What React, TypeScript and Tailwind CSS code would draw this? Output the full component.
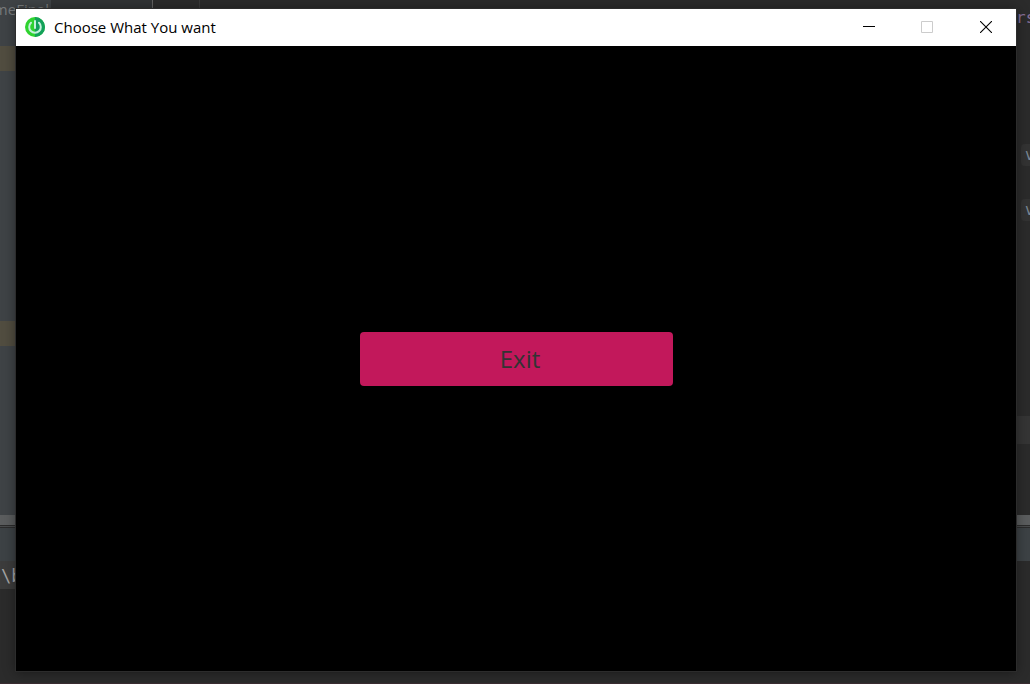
import React from 'react';

function PowerIcon() {
  return (
    <svg viewBox="0 0 20 20" className="size-5 shrink-0" aria-hidden="true">
      <circle cx="10" cy="10" r="10" fill="#2fd32f" />
      <path d="M10 0a10 10 0 0 1 0 20z" fill="#12a05a" />
      <path d="M6 5.8a5.8 5.8 0 1 0 8 0" fill="none" stroke="#c4f1dc" strokeWidth="2" strokeLinecap="round" />
      <path d="M10 4v7" stroke="#c4f1dc" strokeWidth="2" strokeLinecap="round" />
    </svg>
  );
}

function TitleBar() {
  return (
    <header className="flex h-[37px] shrink-0 items-center bg-white pb-px pl-[9px]">
      <PowerIcon />
      <h1 className="ml-[9px] flex-1 font-['Open_Sans','Noto_Sans',sans-serif] text-[15px] leading-5 text-black">
        Choose What You want
      </h1>
      <button type="button" aria-label="Minimize" className="flex h-full w-[58px] items-center justify-center">
        <svg viewBox="0 0 12 12" className="size-3" shapeRendering="crispEdges">
          <path d="M0 5h12v1H0z" fill="#000" />
        </svg>
      </button>
      <button type="button" aria-label="Maximize" disabled className="flex h-full w-[58px] items-center justify-center">
        <svg viewBox="0 0 12 12" className="size-3">
          <path d="M.5.5h11v11H.5z" fill="none" stroke="#ccc" />
        </svg>
      </button>
      <button type="button" aria-label="Close" className="flex h-full w-[60px] items-center justify-center">
        <svg viewBox="0 0 12 12" className="size-3">
          <path d="M0 0l12 12M12 0L0 12" stroke="#000" strokeWidth="1.1" />
        </svg>
      </button>
    </header>
  );
}

function ChoiceWindow() {
  return (
    <section className="z-10 col-start-1 row-start-1 mt-[9px] mr-[14px] mb-[13px] ml-4 flex flex-col bg-black shadow-[0_1px_12px_rgba(0,0,0,0.45)] outline outline-[#2c2c2c]">
      <TitleBar />
      <main className="flex flex-1 items-center justify-center">
        <button
          type="button"
          className="h-[54px] w-[313px] rounded bg-[#c2185b] pl-2 font-['Open_Sans','Noto_Sans',sans-serif] text-2xl text-[#333333]"
        >
          Exit
        </button>
      </main>
    </section>
  );
}

function ProjectPane() {
  return (
    <div className="flex w-[51px] flex-col bg-[#3f4346]">
      <div className="flex h-[46px] justify-end pt-px pr-[2px] font-['Open_Sans','Noto_Sans',sans-serif] text-[15px] leading-4 text-[#777a7c]">
        meFinal
      </div>
      <div className="h-[25px] bg-[#514d40]" />
      <div className="h-[250px]" />
      <div className="h-[25px] bg-[#514d40]" />
      <div className="h-[169px]" />
    </div>
  );
}

function EditorPane() {
  return (
    <div className="flex flex-1 bg-[#2b2b2b]">
      <div className="w-[102px] border-r border-[#626262] bg-[#313335]" />
      <div className="w-[47px] border-r border-[#393939]" />
      <div className="flex flex-1 flex-col items-end overflow-hidden font-['DejaVu_Sans_Mono',monospace]">
        <div className="h-[144px] w-[14px] pt-2 text-base leading-5 text-[#86709a]">rs</div>
        <div className="mb-[33px] h-[22px] w-[9px] rounded-l bg-[#333333] pl-1 text-[15px] leading-[22px] text-[#7a8794]">v</div>
        <div className="h-[22px] w-[9px] rounded-l bg-[#333333] pl-1 text-[15px] leading-[22px] text-[#7a8794]">v</div>
        <div className="mt-[195px] h-7 w-full bg-[#353535]" />
      </div>
    </div>
  );
}

function Workspace() {
  return (
    <div className="col-start-1 row-start-1 flex flex-col overflow-hidden bg-[#2b2b2b]" aria-hidden="true">
      <div className="flex h-[515px]">
        <ProjectPane />
        <EditorPane />
      </div>
      <div className="h-[10px] bg-[#5b5d5e]" />
      <div className="h-[3px] border-y border-[#2b2b2b] bg-[#484a4b]" />
      <div className="h-[33px] bg-[#3d4245]" />
      <div className="h-7 w-1/2 bg-[#3c3c3c] pt-px font-['DejaVu_Sans_Mono',monospace] text-[17px] leading-7 text-[#a5a5a5]">
        <span className="pl-px">\b</span>
      </div>
      <div className="flex-1 border-b border-[#3a2c31]" />
    </div>
  );
}

export default function App() {
  return (
    <div className="grid min-h-screen overflow-hidden">
      <Workspace />
      <ChoiceWindow />
    </div>
  );
}
